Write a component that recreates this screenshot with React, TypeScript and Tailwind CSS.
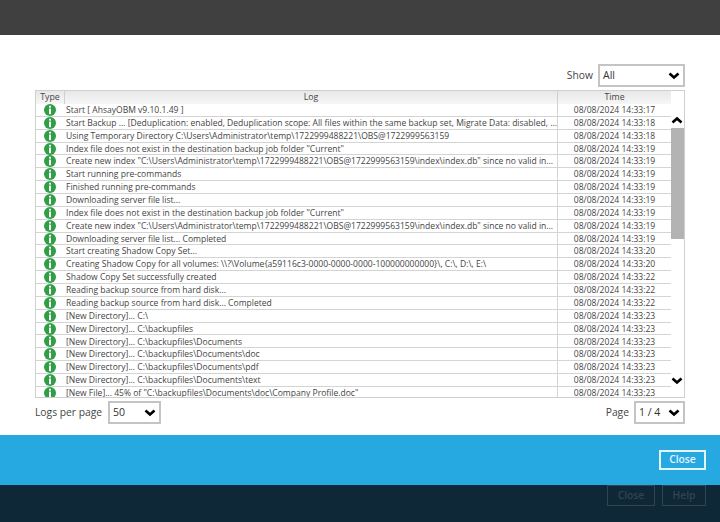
const rows: [string, string][] = [
  ["Start [ AhsayOBM v9.10.1.49 ]", "08/08/2024 14:33:17"],
  ["Start Backup ... [Deduplication: enabled, Deduplication scope: All files within the same backup set, Migrate Data: disabled, ...", "08/08/2024 14:33:18"],
  ["Using Temporary Directory C:\\Users\\Administrator\\temp\\1722999488221\\OBS@1722999563159", "08/08/2024 14:33:18"],
  ["Index file does not exist in the destination backup job folder \"Current\"", "08/08/2024 14:33:19"],
  ["Create new index \"C:\\Users\\Administrator\\temp\\1722999488221\\OBS@1722999563159\\index\\index.db\" since no valid in...", "08/08/2024 14:33:19"],
  ["Start running pre-commands", "08/08/2024 14:33:19"],
  ["Finished running pre-commands", "08/08/2024 14:33:19"],
  ["Downloading server file list...", "08/08/2024 14:33:19"],
  ["Index file does not exist in the destination backup job folder \"Current\"", "08/08/2024 14:33:19"],
  ["Create new index \"C:\\Users\\Administrator\\temp\\1722999488221\\OBS@1722999563159\\index\\index.db\" since no valid in...", "08/08/2024 14:33:19"],
  ["Downloading server file list... Completed", "08/08/2024 14:33:19"],
  ["Start creating Shadow Copy Set...", "08/08/2024 14:33:20"],
  ["Creating Shadow Copy for all volumes: \\\\?\\Volume{a59116c3-0000-0000-0000-100000000000}\\, C:\\, D:\\, E:\\", "08/08/2024 14:33:20"],
  ["Shadow Copy Set successfully created", "08/08/2024 14:33:22"],
  ["Reading backup source from hard disk...", "08/08/2024 14:33:22"],
  ["Reading backup source from hard disk... Completed", "08/08/2024 14:33:22"],
  ["[New Directory]... C:\\", "08/08/2024 14:33:23"],
  ["[New Directory]... C:\\backupfiles", "08/08/2024 14:33:23"],
  ["[New Directory]... C:\\backupfiles\\Documents", "08/08/2024 14:33:23"],
  ["[New Directory]... C:\\backupfiles\\Documents\\doc", "08/08/2024 14:33:23"],
  ["[New Directory]... C:\\backupfiles\\Documents\\pdf", "08/08/2024 14:33:23"],
  ["[New Directory]... C:\\backupfiles\\Documents\\text", "08/08/2024 14:33:23"],
  ["[New File]... 45% of \"C:\\backupfiles\\Documents\\doc\\Company Profile.doc\"", "08/08/2024 14:33:23"],
];

function Chevron({ up = false, className = "" }: { up?: boolean; className?: string }) {
  return (
    <svg viewBox="0 0 12 8" className={className}>
      <path d={up ? "M1.5 6.5 6 2.5l4.5 4" : "M1.5 1.5 6 5.5l4.5-4"} fill="none" stroke="#000" strokeWidth="2.6" />
    </svg>
  );
}

function InfoIcon() {
  return (
    <svg viewBox="0 0 12 12" className="h-[12px] w-[12px] shrink-0">
      <circle cx="6" cy="6" r="6" fill="#2f9e44" />
      <rect x="5" y="1.8" width="2" height="1.8" fill="#fff" />
      <rect x="5" y="4.6" width="2" height="5.6" fill="#fff" />
    </svg>
  );
}

function Select({ value, className }: { value: string; className: string }) {
  return (
    <div className={`flex h-[23px] items-center justify-between border-2 border-[#c4c4c4] bg-white pl-[3px] pr-[3px] text-[10.5px] text-[#333] ${className}`}>
      <span>{value}</span>
      <Chevron className="h-[8px] w-[12px]" />
    </div>
  );
}

export default function App() {
  return (
    <div className="flex h-[522px] w-[720px] flex-col overflow-hidden bg-white text-[#444]" style={{ fontFamily: '"Open Sans", sans-serif' }}>
      <div className="h-[35px] shrink-0 bg-[#404040]" />
      <div className="flex h-[400px] shrink-0 flex-col px-[35px]">
        <div className="mt-[29px] flex items-center justify-end gap-[5px] text-[10.3px]">
          <span>Show</span>
          <Select value="All" className="w-[87px]" />
        </div>
        <div className="relative mt-[3px] h-[308px] overflow-hidden border border-[#cfcfcf]">
          <div className="mr-[13px] flex h-[13px] bg-gradient-to-b from-[#e8e8e8] to-[#f6f6f6] text-center text-[8.8px] leading-[13px] text-[#444]">
            <div className="w-[29px] border-r border-[#d0d0d0]">Type</div>
            <div className="w-[493px] border-r border-[#d0d0d0]">Log</div>
            <div className="flex-1">Time</div>
          </div>
          <div className="mr-[13px] flex flex-col">
            {rows.map(([log, time], i) => (
              <div key={i} className="flex h-[12.86px] shrink-0 items-center border-b border-[#d4d4d4] text-[8.55px] text-[#444]">
                <div className="flex w-[29px] justify-center border-r border-transparent"><InfoIcon /></div>
                <div className="flex h-full w-[493px] items-center overflow-hidden whitespace-nowrap border-r border-[#d4d4d4] pl-[1px] pt-[1px]">{log}</div>
                <div className="flex-1 pt-[1px] text-center">{time}</div>
              </div>
            ))}
          </div>
          <Chevron up className="absolute right-[1px] top-[25px] h-[8px] w-[12px]" />
          <div className="absolute right-0 top-[37px] h-[111px] w-[13px] bg-[#b3b3b3]" />
          <Chevron className="absolute right-[1px] top-[286px] h-[8px] w-[12px]" />
        </div>
        <div className="mt-[3px] flex items-center justify-between text-[10.3px]">
          <div className="flex items-center gap-[6px]">
            <span>Logs per page</span>
            <Select value="50" className="w-[53px]" />
          </div>
          <div className="flex items-center gap-[5px]">
            <span>Page</span>
            <Select value="1 / 4" className="w-[51px]" />
          </div>
        </div>
      </div>
      <div className="flex h-[50px] shrink-0 items-center justify-end bg-[#26a8e0] pr-[14px]">
        <button className="h-[20px] w-[47px] border-2 border-[#e6f4fb] text-[10.3px] font-semibold text-[#e6f4fb]">Close</button>
      </div>
      <div className="flex flex-1 items-start justify-end gap-[7px] bg-[#0e2838] pr-[14px]">
        <button className="h-[21px] w-[48px] border border-[#33444f] text-[10.3px] font-semibold text-[#33444f]">Close</button>
        <button className="h-[21px] w-[44px] border border-[#33444f] text-[10.3px] font-semibold text-[#33444f]">Help</button>
      </div>
    </div>
  );
}
